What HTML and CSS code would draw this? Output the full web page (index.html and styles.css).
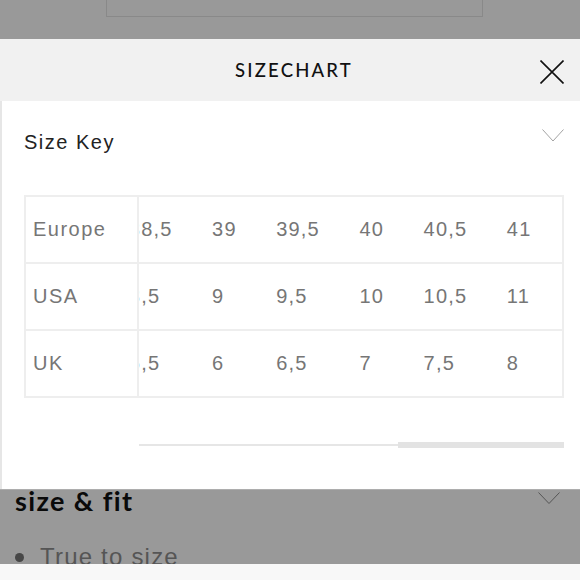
FILE: index.html
```html
<!DOCTYPE html>
<html lang="en">
<head>
<meta charset="utf-8">
<title>Sizechart</title>
<link rel="stylesheet" href="styles.css">
</head>
<body>
<div class="screen">
  <div class="page-top">
    <div class="select-box"></div>
  </div>

  <section class="sizechart">
    <header class="sc-header">
      <h2 class="sc-title">SIZECHART</h2>
      <button class="sc-close" aria-label="Close">
        <svg width="24" height="24" viewBox="0 0 24 24"><path d="M0.5 0.5 L23.5 23.5 M23.5 0.5 L0.5 23.5" stroke="#111" stroke-width="1.6" fill="none"/></svg>
      </button>
    </header>

    <div class="sc-body">
      <div class="key-row">
        <span class="key-title">Size Key</span>
        <svg class="chev" width="22" height="13" viewBox="0 0 22 13"><polyline points="0.5,0.5 11,12 21.5,0.5" stroke="#a3a3a3" stroke-width="1" fill="none"/></svg>
      </div>

      <div class="size-table">
        <div class="labels">
          <div class="label">Europe</div>
          <div class="label">USA</div>
          <div class="label">UK</div>
        </div>
        <div class="scroller">
          <div class="values">
            <div class="cell">38,5</div><div class="cell">8,5</div><div class="cell">5,5</div>
            <div class="cell">39</div><div class="cell">9</div><div class="cell">6</div>
            <div class="cell">39,5</div><div class="cell">9,5</div><div class="cell">6,5</div>
            <div class="cell">40</div><div class="cell">10</div><div class="cell">7</div>
            <div class="cell">40,5</div><div class="cell">10,5</div><div class="cell">7,5</div>
            <div class="cell">41</div><div class="cell">11</div><div class="cell">8</div>
          </div>
        </div>
      </div>

      <div class="scrollbar">
        <div class="track"><div class="thumb"></div></div>
      </div>
    </div>
  </section>

  <section class="page-below">
    <div class="fit-head">
      <h3 class="fit-title">size &amp; fit</h3>
      <svg class="chev-dark" width="22" height="12" viewBox="0 0 22 12"><polyline points="0.5,0.5 11,11.5 21.5,0.5" stroke="#555" stroke-width="1" fill="none"/></svg>
    </div>
    <ul class="fit-list">
      <li>True to size</li>
    </ul>
  </section>

  <div class="bottom-bar"></div>
</div>
</body>
</html>
```

FILE: styles.css
```css
* { box-sizing: border-box; }

html, body {
  margin: 0;
  padding: 0;
}

body {
  font-family: "Liberation Sans", Arial, sans-serif;
  background: #f7f7f7;
}

.screen {
  width: 580px;
  height: 580px;
  overflow: hidden;
  display: flex;
  flex-direction: column;
}

/* dimmed page above the sheet */
.page-top {
  height: 39px;
  background: #999999;
  flex: none;
}

.select-box {
  margin-left: 106px;
  width: 377px;
  height: 17px;
  border: 1.5px solid #898989;
  border-top: none;
}

/* size chart sheet */
.sizechart {
  flex: none;
}

.sc-header {
  height: 62px;
  background: #f1f1f1;
  display: flex;
  align-items: flex-start;
}

.sc-title {
  flex: 1;
  margin: 0;
  padding-left: 60px;
  padding-top: 19px;
  text-align: center;
  font-family: Lato, "Noto Sans", sans-serif;
  font-weight: 500;
  font-size: 18.5px;
  line-height: 24px;
  letter-spacing: 2.2px;
  color: #111;
}

.sc-close {
  flex: none;
  width: 52px;
  margin-top: 21px;
  padding: 0 16px 0 12px;
  border: none;
  background: transparent;
  line-height: 0;
}

.sc-body {
  height: 388px;
  background: #ffffff;
  border-left: 2px solid #e6e6e6;
  padding: 29px 16px 0 22px;
}

.key-row {
  display: flex;
  justify-content: space-between;
  align-items: flex-start;
}

.key-title {
  font-size: 20px;
  line-height: 24px;
  letter-spacing: 1.5px;
  color: #222;
}

.chev {
  margin-top: -1px;
}

.size-table {
  margin-top: 41px;
  display: flex;
  border: 2px solid #eeeeee;
  border-bottom: none;
}

.labels {
  flex: none;
  width: 113px;
  border-right: 2px solid #eeeeee;
}

.label,
.cell {
  height: 67px;
  border-bottom: 2px solid #eeeeee;
  display: flex;
  align-items: center;
  font-size: 20px;
  color: #767676;
  white-space: nowrap;
}

.label {
  padding-left: 7px;
  letter-spacing: 1.5px;
}

.scroller {
  flex: 1;
  min-width: 0;
  overflow: hidden;
  display: flex;
  justify-content: flex-end;
}

.values {
  flex: none;
  display: grid;
  grid-template-rows: repeat(3, 67px);
  grid-auto-flow: column;
  grid-auto-columns: auto;
}

.cell {
  padding: 0 30.5px 0 9px;
  letter-spacing: 1.2px;
}

.scrollbar {
  margin-top: 44px;
  margin-left: 115px;
}

.track {
  height: 6px;
  display: flex;
  justify-content: flex-end;
  background: linear-gradient(#e6e6e6, #e6e6e6) center / 100% 2px no-repeat;
}

.thumb {
  width: 166px;
  background: #e3e3e3;
}

/* dimmed page below the sheet */
.page-below {
  flex: none;
  height: 75px;
  background: #999999;
  border-top: 1.5px solid #adadad;
  overflow: hidden;
  padding: 0 20px 0 15px;
}

.fit-head {
  display: flex;
  justify-content: space-between;
  align-items: flex-start;
}

.fit-title {
  margin: 0;
  padding-top: 1px;
  font-family: Lato, "Noto Sans", sans-serif;
  font-weight: 700;
  font-size: 27px;
  line-height: 20px;
  letter-spacing: 1.4px;
  color: #0a0a0a;
}

.chev-dark {
  margin-top: 2px;
}

.fit-list {
  list-style: none;
  margin: 32px 0 0;
  padding: 0;
}

.fit-list li {
  display: flex;
  align-items: center;
  gap: 16px;
  font-size: 24px;
  line-height: 28px;
  letter-spacing: 1.2px;
  color: #555555;
}

.fit-list li::before {
  content: "";
  width: 9px;
  height: 9px;
  border-radius: 50%;
  background: #474747;
  flex: none;
}

.bottom-bar {
  flex: 1;
  background: #f8f8f8;
}
```
